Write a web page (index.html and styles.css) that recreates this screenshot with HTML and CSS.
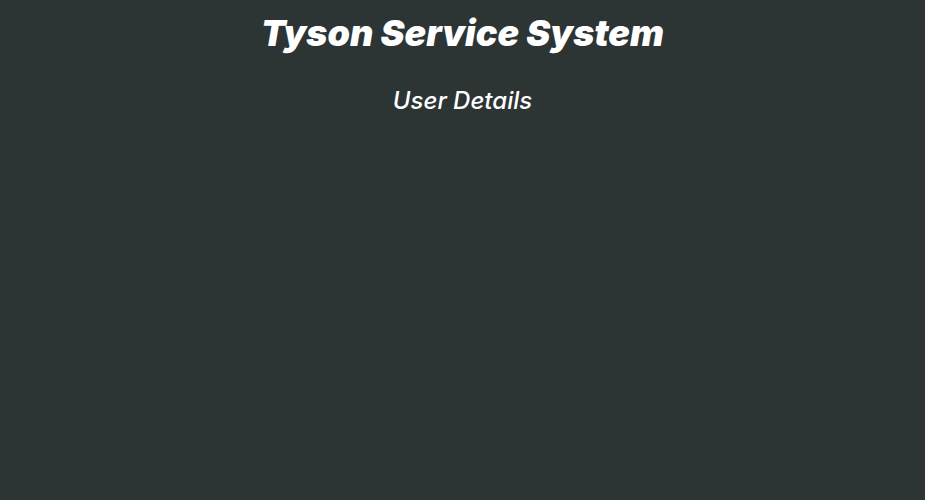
FILE: index.html
```html
<!DOCTYPE html>
<html lang="en">
<head>
<meta charset="utf-8">
<title>Tyson Service System</title>
<link rel="stylesheet" href="styles.css">
</head>
<body>
<div class="page">
  <h1 class="title">Tyson Service System</h1>
  <h2 class="subtitle">User Details</h2>
</div>
</body>
</html>
```
FILE: styles.css
```css
html, body {
  margin: 0;
  padding: 0;
  background: #2c3434;
  height: 100%;
}
.page {
  display: flex;
  flex-direction: column;
  align-items: center;
  font-family: Inter, "Noto Sans", sans-serif;
  color: #ffffff;
  font-style: italic;
}
.title {
  margin: 11px 0 0;
  font-size: 36px;
  font-weight: 900;
  line-height: 44px;
}
.subtitle {
  margin: 31px 0 0;
  font-size: 24px;
  font-weight: 500;
  line-height: 30px;
}
```
